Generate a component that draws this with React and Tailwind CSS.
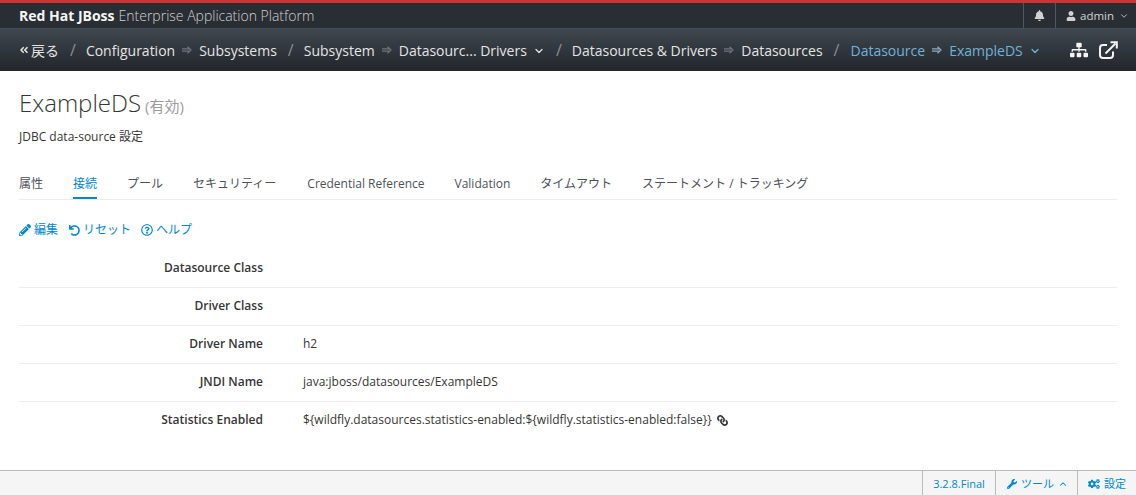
import React from 'react'
import { FaBell, FaUser, FaSitemap, FaPencilAlt, FaUndo, FaRegQuestionCircle, FaLink, FaWrench, FaCogs, FaAngleDoubleLeft } from 'react-icons/fa'
import { LuChevronDown, LuChevronUp } from 'react-icons/lu'

const font = { fontFamily: '"Open Sans", "Noto Sans CJK JP", sans-serif' }

const tabs = ['属性', '接続', 'プール', 'セキュリティー', 'Credential Reference', 'Validation', 'タイムアウト', 'ステートメント / トラッキング']

const rows = [
  { label: 'Datasource Class', value: '' },
  { label: 'Driver Class', value: '' },
  { label: 'Driver Name', value: 'h2' },
  { label: 'JNDI Name', value: 'java:jboss/datasources/ExampleDS' },
  { label: 'Statistics Enabled', value: '${wildfly.datasources.statistics-enabled:${wildfly.statistics-enabled:false}}', link: true },
]

function Slash() {
  return <span className="ml-[11px] mr-[10px] text-[16px] text-[#8b8d8f]">/</span>
}

function Arrow({ blue }) {
  return (
    <svg viewBox="0 0 10 8" className={`mx-[7px] h-[8px] w-[10px] ${blue ? 'text-[#8fa9ba]' : 'text-[#6f7479]'}`} fill="none" stroke="currentColor" strokeWidth="1.2">
      <path d="M0 2.8h7.5M0 5.2h7.5M5.5 0.8L9 4L5.5 7.2" />
    </svg>
  )
}

export default function App() {
  return (
    <div className="flex h-[495px] w-[1136px] flex-col overflow-hidden bg-white text-[12px] text-[#363636]" style={font}>
      <header className="flex h-[28px] shrink-0 items-center border-t-[3px] border-[#cc3333] bg-[#292e34] pl-[19px]">
        <span className="text-[14px] font-bold text-[#f5f5f5]">Red Hat JBoss</span>
        <span className="ml-[4px] text-[14px] font-light text-[#d1d1d1]">Enterprise Application Platform</span>
        <div className="ml-auto flex h-full items-center text-[#d1d1d1]">
          <div className="flex h-full w-[32px] items-center justify-center border-l border-[#53565b]">
            <FaBell className="text-[11px]" />
          </div>
          <div className="flex h-full w-[81px] items-center border-l border-[#53565b] pl-[10px] text-[11.5px]">
            <FaUser className="mr-[4px] text-[10px]" />
            admin
            <LuChevronDown className="ml-[5px] text-[10px]" />
          </div>
        </div>
      </header>

      <nav className="flex h-[43px] shrink-0 items-center whitespace-nowrap border-t border-[#474c50] bg-gradient-to-b from-[#3f4750] to-[#22262b] pl-[19px] pr-[18px] text-[14px] text-[#e4e4e4]">
        <FaAngleDoubleLeft className="mr-[2px] text-[10px]" />
        <span>戻る</span>
        <Slash />
        <span>Configuration</span>
        <Arrow />
        <span>Subsystems</span>
        <Slash />
        <span>Subsystem</span>
        <Arrow />
        <span>Datasourc... Drivers</span>
        <LuChevronDown className="ml-[6px] mt-[2px] text-[12px]" strokeWidth={2.5} />
        <Slash />
        <span>Datasources &amp; Drivers</span>
        <Arrow />
        <span>Datasources</span>
        <Slash />
        <span className="ml-px text-[#70b2d6]">Datasource</span>
        <Arrow blue />
        <span className="text-[#70b2d6]">ExampleDS</span>
        <LuChevronDown className="ml-[6px] mt-[2px] text-[12px] text-[#70b2d6]" strokeWidth={2.5} />
        <div className="ml-auto flex items-center gap-[11px] text-[#f5f5f5]">
          <FaSitemap className="text-[18px]" />
          <svg viewBox="0 0 19 18" className="h-[18px] w-[19px]" fill="none" stroke="currentColor" strokeWidth="2">
            <path d="M14 10.5V14a3 3 0 0 1-3 3H4a3 3 0 0 1-3-3V7a3 3 0 0 1 3-3h4" />
            <path d="M6.5 12.5L16.5 2.5" />
            <path d="M11.5 1.2h6.3v6.3" strokeLinejoin="miter" />
          </svg>
        </div>
      </nav>

      <main className="flex-1 px-[19px]">
        <h1 className="mt-[15px] flex items-baseline text-[24px] leading-[33px] font-light text-[#363636]">
          ExampleDS
          <small className="ml-[4px] text-[15px] font-normal text-[#9c9c9c]">(有効)</small>
        </h1>
        <p className="mt-[5px] leading-[18px]">JDBC data-source 設定</p>

        <div className="mt-[22px] flex gap-[30px] border-b border-[#ededed]">
          {tabs.map((tab, i) => (
            <div
              key={tab}
              className={`h-[31px] pt-[7px] leading-[18px] ${i === 1 ? 'border-b-2 border-[#0088ce] text-[#0088ce]' : 'text-[#4d5258]'} ${i === 3 ? 'pr-px' : ''}`}
            >
              {tab}
            </div>
          ))}
        </div>

        <div className="mt-[21px] flex h-[18px] items-center text-[#0088ce]">
          <FaPencilAlt className="mr-[3px] text-[12px]" />
          <span>編集</span>
          <FaUndo className="ml-[11px] mr-[3px] text-[11px]" />
          <span>リセット</span>
          <FaRegQuestionCircle className="ml-[10px] mr-[3px] text-[12px]" />
          <span>ヘルプ</span>
        </div>

        <div className="mt-[11px]">
          {rows.map((row, i) => (
            <div key={row.label} className={`flex h-[38px] items-center pb-[2px] ${i < rows.length - 1 ? 'border-b border-[#ededed]' : ''}`}>
              <div className="w-[244px] text-right font-semibold">{row.label}</div>
              <div className="ml-[40px] flex items-center">
                {row.value}
                {row.link && <FaLink className="ml-[5px] -scale-x-100 text-[11px]" />}
              </div>
            </div>
          ))}
        </div>
      </main>

      <footer className="flex h-[25px] shrink-0 items-center justify-end border-t border-[#bbbbbb] bg-[#f5f5f5] text-[11px] text-[#0088ce]">
        <div className="flex h-full w-[73px] items-center justify-center border-l border-[#bbbbbb] pt-[2px]">3.2.8.Final</div>
        <div className="flex h-full w-[82px] items-center border-l border-[#bbbbbb] pl-[11px] pt-[2px]">
          <FaWrench className="mr-[4px] text-[10px]" />
          ツール
          <LuChevronUp className="ml-[4px] text-[10px]" strokeWidth={2.5} />
        </div>
        <div className="flex h-full items-center border-l border-[#bbbbbb] px-[10px] pt-[2px]">
          <FaCogs className="mr-[4px] text-[12px]" />
          設定
        </div>
      </footer>
    </div>
  )
}
